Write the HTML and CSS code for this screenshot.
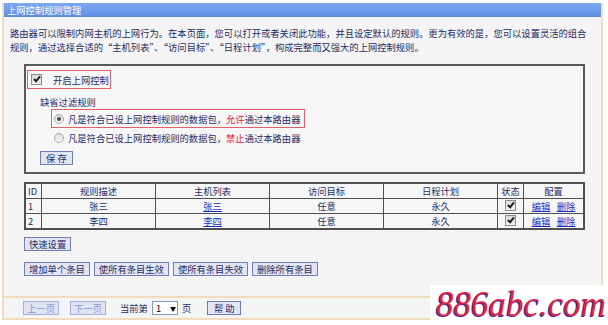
FILE: index.html
```html
<!DOCTYPE html>
<html lang="zh-CN">
<head>
    <meta charset="UTF-8">
    <title>上网控制规则管理</title>
    <link rel="stylesheet" href="styles.css">
</head>
<body>
    <div class="page">
        <div class="panel">
            <div class="title">上网控制规则管理</div>
            <div class="content">
                <p class="intro">路由器可以限制内网主机的上网行为。在本页面，您可以打开或者关闭此功能，并且设定默认的规则。更为有效的是，您可以设置灵活的组合<br>规则，通过选择合适的“主机列表”、“访问目标”、“日程计划”，构成完整而又强大的上网控制规则。</p>

                <div class="main">
                    <div class="box">
                        <div class="enable hl">
                            <span class="cb"></span>
                            <span>开启上网控制</span>
                        </div>
                        <div class="rules">
                            <div class="sub">缺省过滤规则</div>
                            <div class="radio-row hl">
                                <span class="radio on"></span>
                                <span>凡是符合已设上网控制规则的数据包，<span class="red">允许</span>通过本路由器</span>
                            </div>
                            <div class="radio-row">
                                <span class="radio"></span>
                                <span>凡是符合已设上网控制规则的数据包，<span class="red">禁止</span>通过本路由器</span>
                            </div>
                            <button class="btn save">保 存</button>
                        </div>
                    </div>

                    <table class="rules-table">
                        <tr>
                            <th class="c-id">ID</th>
                            <th class="c-wide">规则描述</th>
                            <th class="c-wide">主机列表</th>
                            <th class="c-wide">访问目标</th>
                            <th class="c-wide">日程计划</th>
                            <th class="c-state">状态</th>
                            <th>配置</th>
                        </tr>
                        <tr>
                            <td class="c-id">1</td>
                            <td>张三</td>
                            <td><a href="#">张三</a></td>
                            <td>任意</td>
                            <td>永久</td>
                            <td><span class="cb small"></span></td>
                            <td><a href="#">编辑</a>&nbsp;&nbsp;&nbsp;<a href="#">删除</a></td>
                        </tr>
                        <tr>
                            <td class="c-id">2</td>
                            <td>李四</td>
                            <td><a href="#">李四</a></td>
                            <td>任意</td>
                            <td>永久</td>
                            <td><span class="cb small"></span></td>
                            <td><a href="#">编辑</a>&nbsp;&nbsp;&nbsp;<a href="#">删除</a></td>
                        </tr>
                    </table>

                    <button class="btn quick">快速设置</button>

                    <div class="actions">
                        <button class="btn">增加单个条目</button>
                        <button class="btn">使所有条目生效</button>
                        <button class="btn">使所有条目失效</button>
                        <button class="btn">删除所有条目</button>
                    </div>
                </div>
            </div>
        </div>

        <div class="footer">
            <button class="btn off">上一页</button>
            <button class="btn off">下一页</button>
            <span class="cur">当前第</span>
            <span class="select">1<span class="arrow">▼</span></span>
            <span>页</span>
            <button class="btn help">帮 助</button>
        </div>

        <div class="watermark">886abc.com</div>
    </div>
</body>
</html>
```

FILE: styles.css
```css
body {
    margin: 0;
    background-color: #fff;
    font-family: "Noto Sans CJK SC", "Liberation Sans", sans-serif;
    font-size: 9.3px;
    color: #1f2c66;
}
.page {
    position: relative;
    width: 608px;
    height: 325px;
    overflow: hidden;
}
.panel {
    margin: 3px 0 0 2px;
    width: 601px;
    height: 295px;
    box-sizing: border-box;
    border-left: 2px solid #f2dcbd;
    border-right: 2px solid #f2dcbd;
    border-bottom: 2px solid #f2dcbd;
    background-color: #f4f4f4;
}
.title {
    height: 14px;
    line-height: 14px;
    padding-left: 3px;
    color: #fff;
    background: linear-gradient(#7eaaf2, #5e8ee2);
}
.content {
    padding: 9px 0 0 6px;
}
.intro {
    margin: 0;
    line-height: 14px;
}
.main {
    margin: 10px 0 0 14px;
    width: 561px;
}

/* enable / default rule box */
.box {
    height: 110px;
    box-sizing: border-box;
    border: 2px solid #5a5a5a;
    background-color: #f6f6f6;
}
.hl {
    border: 1px solid #e2606c;
}
.enable {
    display: inline-flex;
    align-items: center;
    gap: 11px;
    height: 17px;
    margin: 4px 0 0 1px;
    padding: 0 1px 0 3px;
}
.cb {
    display: inline-block;
    position: relative;
    flex-shrink: 0;
    width: 9px;
    height: 9px;
    border: 1px solid #8d8d8d;
    background: linear-gradient(#d8d8d8, #f2f2f2);
}
.cb::after {
    content: "";
    position: absolute;
    left: 3px;
    top: 0;
    width: 2px;
    height: 5px;
    border: solid #222;
    border-width: 0 2px 2px 0;
    transform: rotate(40deg);
}
.rules {
    margin: 6px 0 0 14px;
}
.sub {
    line-height: 14px;
}
.radio-row {
    display: flex;
    align-items: center;
    gap: 4px;
    width: fit-content;
    height: 17px;
    margin-left: 11px;
    padding: 0 4px 0 2px;
    border: 1px solid transparent;
    white-space: nowrap;
}
.radio-row.hl {
    border-color: #e2606c;
}
.radio {
    position: relative;
    flex-shrink: 0;
    width: 8px;
    height: 8px;
    border: 1px solid #a8a8a8;
    border-radius: 50%;
    background: linear-gradient(#dcdcdc, #f6f6f6);
}
.radio.on::after {
    content: "";
    position: absolute;
    left: 2px;
    top: 2px;
    width: 4px;
    height: 4px;
    border-radius: 50%;
    background-color: #4a4a4a;
}
.red {
    color: #e8202c;
}
.btn {
    font-family: inherit;
    font-size: 9.3px;
    color: #1f2c66;
    height: 14px;
    line-height: 12px;
    padding: 0 4px;
    border: 1px solid #6f7db8;
    background-color: #e2e5f1;
    cursor: pointer;
}
.save {
    margin-top: 4px;
    padding: 0 5px;
}

/* rule list */
.rules-table {
    width: 561px;
    margin-top: 8px;
    border-collapse: collapse;
    border: 2px solid #505050;
    background-color: #f6f6f6;
}
.rules-table th,
.rules-table td {
    height: 14px;
    padding: 0;
    border: 1px solid #505050;
    font-weight: normal;
    text-align: center;
    line-height: 14px;
}
.c-id {
    width: 13px;
    text-align: left !important;
    padding-left: 2px !important;
}
.c-wide {
    width: 113px;
}
.c-state {
    width: 25px;
}
.cb.small {
    vertical-align: -1px;
}
.rules-table a {
    color: #1c2fc0;
}
.quick {
    display: block;
    margin-top: 7px;
}
.actions {
    display: flex;
    gap: 4px;
    margin-top: 11px;
}

/* paging */
.footer {
    display: flex;
    align-items: center;
    height: 22px;
    margin-left: 2px;
    width: 601px;
    box-sizing: border-box;
    padding-left: 19px;
    border-left: 2px solid #f2dcbd;
    border-bottom: 2px solid #f2dcbd;
    background-color: #f4f4f4;
}
.off {
    width: 36px;
    padding: 0;
    color: #8a9ad4;
    border-color: #a3afd9;
    background-color: #dfe3f2;
    margin-right: 11px;
}
.cur {
    margin-left: 3px;
    margin-right: 4px;
}
.select {
    display: inline-flex;
    align-items: center;
    justify-content: space-between;
    width: 20px;
    height: 12px;
    padding: 0 1px 0 3px;
    margin-right: 4px;
    border: 1px solid #7f9db9;
    background-color: #fff;
    color: #000;
}
.arrow {
    font-size: 6px;
}
.help {
    margin-left: 16px;
    width: 34px;
}

.watermark {
    position: absolute;
    left: 430px;
    top: 285px;
    width: 173px;
    height: 40px;
    background-color: #fff;
    font-family: "Liberation Serif", serif;
    font-style: italic;
    font-size: 35px;
    line-height: 40px;
    padding-left: 6px;
    box-sizing: border-box;
    color: #e4213e;
    text-shadow: -1px 1px 0 #3b2ea4;
    white-space: nowrap;
}
```
